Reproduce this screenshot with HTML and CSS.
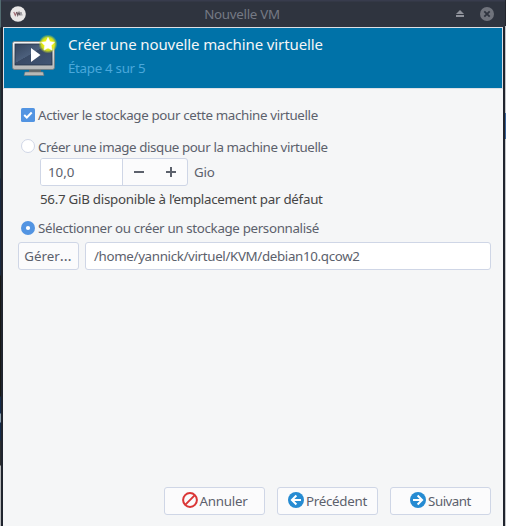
FILE: index.html
```html
<!DOCTYPE html>
<html lang="fr">
<head>
<meta charset="utf-8">
<title>Nouvelle VM</title>
<link rel="stylesheet" href="styles.css">
</head>
<body>
<div class="desktop">
<div class="edge edge-left"></div>
<div class="window">
  <header class="titlebar">
    <svg class="app-icon" width="16" height="16" viewBox="0 0 16 16"><circle cx="8" cy="8" r="7.8" fill="#e9e7e7"/><path d="M3.8 6l1.5 3.4L6.8 6" fill="none" stroke="#a06a72" stroke-width="1.1"/><path d="M6.8 6l1 3.4L9 6.4l1 3" fill="none" stroke="#5c5158" stroke-width="1.1"/><path d="M10 6l1 3.4V6l1.2 3.4" fill="none" stroke="#96949a" stroke-width=".9"/></svg>
    <span class="title">Nouvelle VM</span>
    <svg class="shade" width="8" height="8" viewBox="0 0 8 8"><path d="M4 0l4 4H0zM0 5h8v2H0z" fill="#8f929b"/></svg>
    <svg class="close" width="14" height="14" viewBox="0 0 14 14"><circle cx="7" cy="7" r="7" fill="#70737c"/><path d="M4.3 4.3l5.4 5.4M9.7 4.3L4.3 9.7" stroke="#2f343f" stroke-width="1.8"/></svg>
  </header>
  <main class="content">
    <section class="banner">
      <svg class="monitor" width="48" height="48" viewBox="0 0 48 48">
        <defs>
          <linearGradient id="frame" x1="0" y1="0" x2="0" y2="1"><stop offset="0" stop-color="#f6f6f6"/><stop offset="1" stop-color="#b5b7b7"/></linearGradient>
          <linearGradient id="screen" x1="0" y1="0" x2="1" y2="1"><stop offset="0" stop-color="#34445c"/><stop offset=".45" stop-color="#4c607d"/><stop offset=".46" stop-color="#394a65"/><stop offset="1" stop-color="#425675"/></linearGradient>
          <radialGradient id="glow"><stop offset=".45" stop-color="#f4f500"/><stop offset=".7" stop-color="#d9e51b" stop-opacity=".9"/><stop offset="1" stop-color="#b9d635" stop-opacity="0"/></radialGradient>
        </defs>
        <path d="M18 34h12v5H18z" fill="#60676b"/>
        <path d="M14 37h18l1 3.5H13z" fill="#b9b9b7" stroke="#777" stroke-width=".6"/>
        <rect x="1.5" y="6.5" width="42" height="28" rx="2" fill="url(#frame)" stroke="#767c7e" stroke-width=".8"/>
        <rect x="4" y="9" width="37" height="21" fill="url(#screen)" stroke="#26354a" stroke-width=".8"/>
        <path d="M20 13l9.5 7-9.5 7z" fill="#fff"/>
        <circle cx="37" cy="9" r="9.5" fill="url(#glow)"/>
        <path d="M37 2.5l2 4.2 4.5.6-3.3 3.2.8 4.6-4-2.2-4 2.2.8-4.6-3.3-3.2 4.5-.6z" fill="#fff" stroke="#fff" stroke-linejoin="round" stroke-width=".6"/>
      </svg>
      <div class="headings">
        <div class="heading">Créer une nouvelle machine virtuelle</div>
        <div class="step">Étape 4 sur 5</div>
      </div>
    </section>
    <form class="form">
      <label class="row activate">
        <svg width="14" height="14" viewBox="0 0 14 14"><rect width="14" height="14" rx="1.6" fill="#5294e2"/><path d="M3.2 7l2.6 2.5 4.9-5" fill="none" stroke="#fff" stroke-width="2"/></svg>
        <span class="t-activate">Activer le stockage pour cette machine virtuelle</span>
      </label>
      <label class="row create">
        <svg width="14" height="14" viewBox="0 0 14 14"><circle cx="7" cy="7" r="6.5" fill="#fff" stroke="#cfd6e6"/></svg>
        <span class="t-create">Créer une image disque pour la machine virtuelle</span>
      </label>
      <div class="size">
        <div class="spin">
          <span class="value">10,0</span>
          <span class="steps">
            <svg width="12" height="12" viewBox="0 0 12 12"><path d="M1 6h10" stroke="#5c616c" stroke-width="2"/></svg>
            <svg width="12" height="12" viewBox="0 0 12 12"><path d="M1 6h10M6 1v10" stroke="#5c616c" stroke-width="2"/></svg>
          </span>
        </div>
        <span class="unit">Gio</span>
      </div>
      <div class="available"><span class="t-available">56.7 GiB disponible à l’emplacement par défaut</span></div>
      <label class="row select">
        <svg width="14" height="14" viewBox="0 0 14 14"><circle cx="7" cy="7" r="7" fill="#5294e2"/><circle cx="7" cy="7" r="2.1" fill="#fff"/></svg>
        <span class="t-select">Sélectionner ou créer un stockage personnalisé</span>
      </label>
      <div class="path-row">
        <div class="button manage"><span class="t-manage">Gérer<span class="dots">…</span></span></div>
        <div class="path"><span class="t-path">/home/yannick/virtuel/KVM/debian10.qcow2</span></div>
      </div>
    </form>
    <footer class="actions">
      <div class="button action">
        <svg width="16" height="16" viewBox="0 0 16 16"><circle cx="8" cy="8" r="6.9" fill="none" stroke="#da3636" stroke-width="2"/><path d="M3.4 12.6l9.2-9.2" stroke="#da3636" stroke-width="2"/></svg>
        <span class="t-cancel">Annuler</span>
      </div>
      <div class="button action">
        <svg width="16" height="16" viewBox="0 0 16 16"><circle cx="8" cy="8" r="8" fill="#268bd2"/><path d="M8.4 3.5L3.9 8l4.5 4.5M4 8h9" fill="none" stroke="#fff" stroke-width="2"/></svg>
        <span class="t-prev">Précédent</span>
      </div>
      <div class="button action">
        <svg width="16" height="16" viewBox="0 0 16 16"><circle cx="8" cy="8" r="8" fill="#268bd2"/><path d="M7.6 3.5L12.1 8l-4.5 4.5M12 8H3" fill="none" stroke="#fff" stroke-width="2"/></svg>
        <span class="t-next">Suivant</span>
      </div>
    </footer>
  </main>
</div>
<div class="edge edge-right"></div>
</div>
</body>
</html>
```
FILE: styles.css
```css
* { box-sizing: border-box; }
body { margin: 0; font: 13.33px/18px "Noto Sans", sans-serif; color: #5c616c; overflow: hidden; }
svg { display: block; flex: none; }
span { white-space: nowrap; }
.desktop { width: 506px; height: 526px; display: flex; background: #20242e; }
.edge { width: 1px; flex: none; }
.edge-left { background: linear-gradient(#526b70 0 27px, #24383d 28px 178px, #18283e 179px 275px, #171815 276px 396px, #142b4b 397px 413px, #8ba0b0 414px 422px, #142b4b 423px 440px, #2b2d2f 441px 465px, #b7b9bb 466px); }
.edge-right { background: linear-gradient(#22252d 0 26px, #c4c6c9 26px 113px, #3c659b 113px 139px, #c4c6c9 139px); }
.window { flex: 1; display: flex; flex-direction: column; }
.titlebar { height: 27px; display: flex; align-items: center; background: linear-gradient(#383c4d 0 1px, #2f343f 2px); padding: 0 11px 0 9px; color: #757984; }
.title { flex: 1; text-align: center; padding-left: 2px; letter-spacing: -.27px; }
.shade { margin-right: 16px; }
.content { flex: 1; display: flex; flex-direction: column; margin: 0 2px; background: #f5f6f7; }
.banner { height: 62px; display: flex; background: #0072a8; border: 1px solid #dce0e6; padding: 2px 7px; }
.monitor { margin-top: 5px; }
.headings { padding: 4px 0 0 9px; white-space: nowrap; }
.heading { font-size: 15px; line-height: 21px; color: #f5f6f7; letter-spacing: -.1px; }
.step { line-height: 18px; margin-top: 4px; color: #4aa8db; letter-spacing: -.3px; }
.form { padding: 17px 12px 0 15px; }
.row { height: 18px; display: flex; align-items: center; gap: 3px; padding-left: 3px; }
.create { margin-top: 14px; }
.create svg { margin-bottom: 2px; }
.t-activate { letter-spacing: -.34px; }
.t-create { letter-spacing: -.4px; }
.t-available { letter-spacing: -.26px; }
.t-select { letter-spacing: -.34px; }
.t-path { letter-spacing: -.34px; }
.size { display: flex; align-items: center; gap: 6px; height: 28px; margin: 2px 0 0 22px; }
.unit { letter-spacing: -.2px; }
.spin { width: 148px; height: 28px; display: flex; border: 1px solid #cfd6e6; border-radius: 3px; background: #fbfbfc; overflow: hidden; }
.value { width: 82px; padding: 4px 7px; background: #fff; border-right: 1px solid #cfd6e6; }
.steps { flex: 1; display: flex; align-items: center; justify-content: center; gap: 20px; }
.available { margin: 4px 0 0 22px; height: 18px; color: #454545; }
.select { margin-top: 11px; }
.path-row { display: flex; gap: 6px; margin-top: 5px; }
.button { height: 28px; display: flex; align-items: center; justify-content: center; gap: 2px; border: 1px solid #cfd6e6; border-radius: 3px; background: #fbfbfc; }
.manage { width: 61px; }
.dots { letter-spacing: 1px; font-size: 15px; line-height: 1; }
.path { flex: 1; height: 28px; display: flex; align-items: center; padding-left: 8px; border: 1px solid #cfd6e6; border-radius: 3px; background: #fff; }
.actions { display: flex; justify-content: flex-end; gap: 12px; margin-top: auto; padding: 0 12px 11px 0; }
.action { width: 101px; }
.action svg { margin-bottom: 2px; }
.t-cancel, .t-prev { letter-spacing: -.27px; }
.t-next { letter-spacing: -.5px; }
```
